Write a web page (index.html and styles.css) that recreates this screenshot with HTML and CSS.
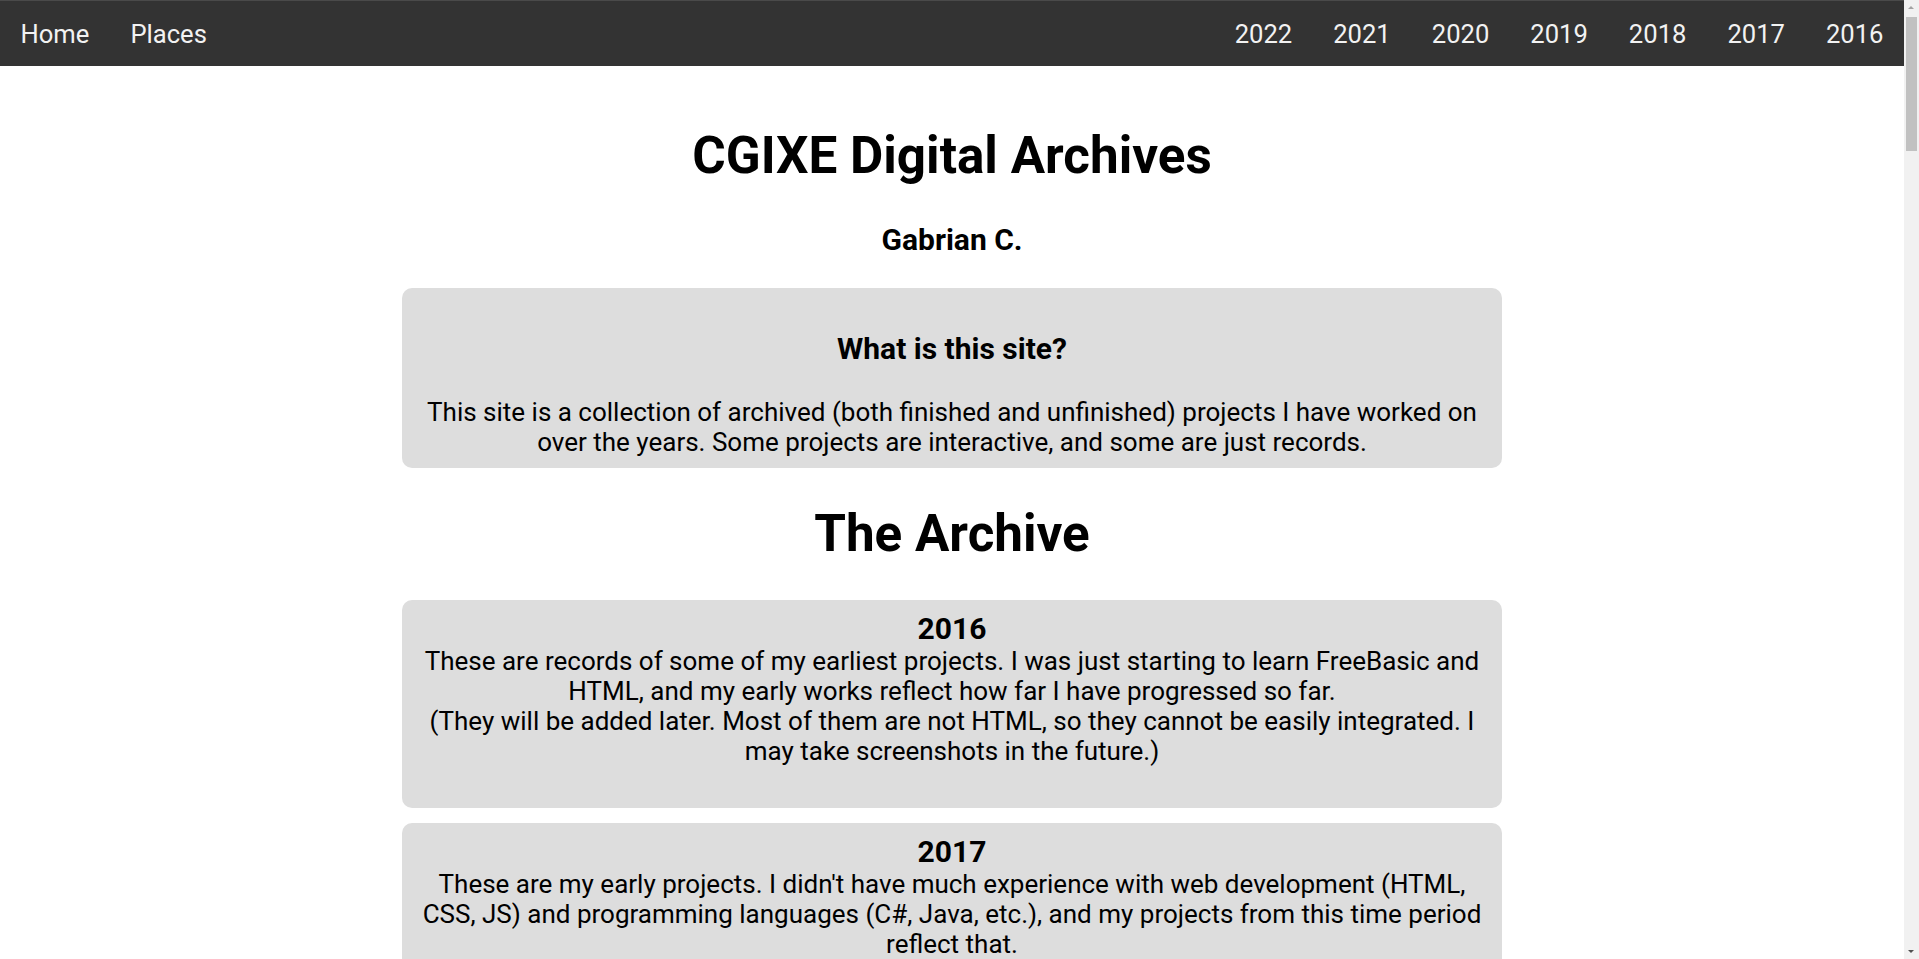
FILE: index.html
```html
<!DOCTYPE html>
<html lang="en">
<head>
<meta charset="utf-8">
<title>CGIXE Digital Archives</title>
<link rel="stylesheet" href="styles.css">
</head>
<body>
<nav class="topnav">
  <div class="nav-group">
    <a class="nav-link" href="#">Home</a>
    <a class="nav-link" href="#">Places</a>
  </div>
  <div class="nav-group">
    <a class="nav-link" href="#">2022</a>
    <a class="nav-link" href="#">2021</a>
    <a class="nav-link" href="#">2020</a>
    <a class="nav-link" href="#">2019</a>
    <a class="nav-link" href="#">2018</a>
    <a class="nav-link" href="#">2017</a>
    <a class="nav-link" href="#">2016</a>
  </div>
</nav>
<main class="page">
  <h1 class="page-title">CGIXE Digital Archives</h1>
  <h3 class="author">Gabrian C.</h3>
  <section class="card intro">
    <h3 class="intro-title">What is this site?</h3>
    <p class="card-text">This site is a collection of archived (both finished and unfinished) projects I have worked on over the years. Some projects are interactive, and some are just records.</p>
  </section>
  <h1 class="page-title">The Archive</h1>
  <section class="card year">
    <h3 class="year-title">2016</h3>
    <p class="card-text">These are records of some of my earliest projects. I was just starting to learn FreeBasic and HTML, and my early works reflect how far I have progressed so far.<br>(They will be added later. Most of them are not HTML, so they cannot be easily integrated. I may take screenshots in the future.)</p>
  </section>
  <section class="card year">
    <h3 class="year-title">2017</h3>
    <p class="card-text">These are my early projects. I didn't have much experience with web development (HTML, CSS, JS) and programming languages (C#, Java, etc.), and my projects from this time period reflect that.</p>
  </section>
</main>
<div class="scroll-gutter" aria-hidden="true">
  <span class="scroll-arrow up"></span>
  <span class="scroll-thumb"></span>
  <span class="scroll-arrow down"></span>
</div>
</body>
</html>
```
FILE: styles.css
```css
html {
  background: #f1f1f1;
}
html, body {
  padding: 0;
}
body {
  margin: 0 15px 0 0;
  min-height: 100vh;
  font-family: Roboto, "Liberation Sans", sans-serif;
  font-size: 25.6px;
  color: #000;
  background: #fff;
}
.topnav {
  display: flex;
  justify-content: space-between;
  background: #333;
  border-top: 1px solid #4a4a4a;
}
.nav-group {
  display: flex;
}
.nav-link {
  color: #f2f2f2;
  text-decoration: none;
  padding: 18px 20.5px 17px;
  line-height: 30px;
}
.page {
  padding: 23.5px 0 0;
  text-align: center;
}
.page-title {
  font-size: 51.2px;
  font-weight: 700;
  margin: 35.5px 0;
}
.author {
  font-size: 30px;
  margin: 28px 0 31px;
}
.card {
  width: 1100px;
  box-sizing: border-box;
  margin: 0 auto 15px;
  padding: 12px 20px;
  background: #ddd;
  border-radius: 10px;
}
.intro {
  padding: 13px 20px 11px;
}
.intro-title {
  font-size: 30px;
  margin: 30px 0 31px;
}
.card-text {
  margin: 0;
  font-size: 26px;
}
.year {
  padding-top: 11px;
  padding-bottom: 42.5px;
}
.year-title {
  font-size: 30px;
  margin: 0;
}
.scroll-gutter {
  position: fixed;
  top: 0;
  right: 0;
  bottom: 0;
  width: 15px;
  background: #f1f1f1;
}
.scroll-thumb {
  position: absolute;
  top: 17px;
  left: 2px;
  width: 11px;
  height: 134px;
  background: #c1c1c1;
}
.scroll-arrow {
  position: absolute;
  left: 4px;
  width: 0;
  height: 0;
  border-left: 3.5px solid transparent;
  border-right: 3.5px solid transparent;
}
.scroll-arrow.up {
  top: 6px;
  border-bottom: 3.5px solid #a3a3a3;
}
.scroll-arrow.down {
  bottom: 6px;
  border-top: 3.5px solid #505050;
}
```
